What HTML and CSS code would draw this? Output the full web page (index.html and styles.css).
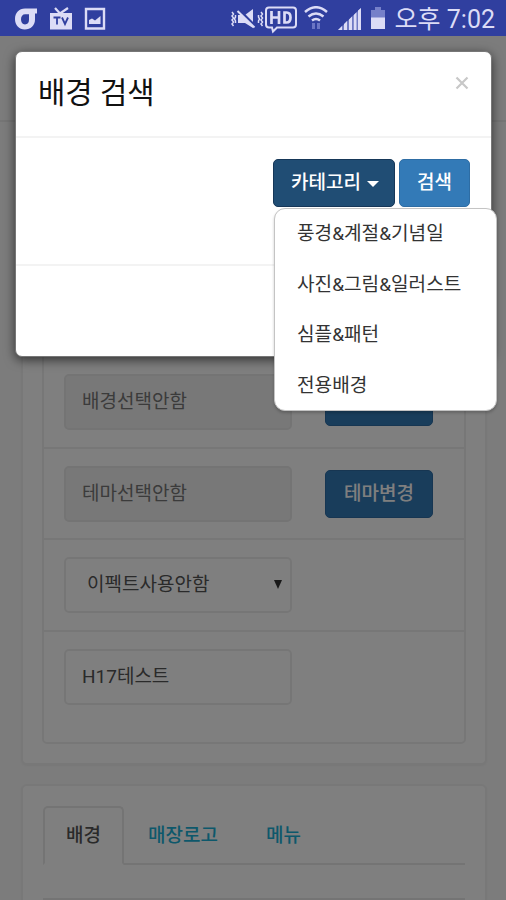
FILE: index.html
```html
<!DOCTYPE html>
<html lang="ko">
<head>
<meta charset="utf-8">
<title>배경 검색</title>
<link rel="stylesheet" href="styles.css">
</head>
<body>
<header class="status">
  <div class="status-left">
    <svg width="24" height="24" viewBox="0 0 24 24"><path d="M23 1.500H11C5 1.500 1 6 1 12s4 10.500 9.800 10.500S21 18.500 21 12.500V6.500h2z" fill="#dcdcf6"/><path d="M11.200 7.200H15v5.600c0 2.800-1.400 4.700-4 4.700s-4-2.100-4-5.200 1.600-5.100 4.200-5.100z" fill="#303f9f"/></svg>
    <svg width="24" height="24" viewBox="0 0 24 24"><path d="M6 1l5 5.500L19 1" fill="none" stroke="#dcdcf6" stroke-width="2.200"/><path d="M1 6h22v16.500H1z" fill="#dcdcf6"/><path d="M4.500 10.500h7M8 10.500v7M13 10.500l3 6.500 3-6.500" fill="none" stroke="#303f9f" stroke-width="1.800"/></svg>
    <svg width="22" height="24" viewBox="0 0 22 24"><path d="M2 2h18v19.500H2z" fill="none" stroke="#dcdcf6" stroke-width="2.400"/><path d="M5 17v-4l3-1.500 3 2L16.500 9v8z" fill="#dcdcf6"/></svg>
  </div>
  <div class="status-right">
    <svg class="mute" width="34" height="24" viewBox="0 0 34 24" fill="none" stroke="#dcdcf6" stroke-width="1.500"><path d="M2 4l1.500 2L2 8l1.500 2L2 12l1.500 2L2 16l1.500 2M5.500 7v2l-1 2 1 2v2M31 4l1.500 2L31 8l1.500 2-1.500 2 1.500 2-1.500 2 1.500 2M28.500 7v2l1 2-1 2v2"/><path d="M8 7h7l8-6v19l-8-5H8z" fill="#dcdcf6" stroke="none"/><path d="M9 2l17 17" stroke="#303f9f" stroke-width="3"/><path d="M7.500 3l17 16.500" stroke-width="2"/></svg>
    <svg class="hd" width="32" height="28" viewBox="0 0 32 28"><path d="M4 1.500h24q3 0 3 3v14q0 3-3 3H12l-4 4-1-4H4q-3 0-3-3v-14q0-3 3-3z" fill="none" stroke="#dcdcf6" stroke-width="2"/><path d="M6.500 5v13M6.500 11.500h7.500M14 5v13M19.500 6.500v10h2q4 0 4-5t-4-5z" fill="none" stroke="#dcdcf6" stroke-width="2.700"/></svg>
    <svg class="wifi" width="24" height="26" viewBox="0 0 24 26" fill="none" stroke="#dcdcf6" stroke-width="2.500"><path d="M1 6q11-9.500 22 0M4.500 10.500q7.500-6 15 0M8 14.500q4-3 8 0"/><path d="M9.500 17v6M14.500 17v6" stroke="#6b75c4" stroke-width="3"/></svg>
    <svg class="signal" width="24" height="24" viewBox="0 0 24 24"><path d="M0 23L23 1v22z" fill="#6f7ac4"/><path d="M0 23l4-4v4zM6 17l3-3v9H6zM11 12.500l3-3V23h-3zM15.800 8l2.700-2.700V23h-2.700zM20 3.500L23 1v22h-3z" fill="#dcdcf6"/></svg>
    <svg class="battery" width="16" height="24" viewBox="0 0 16 24"><path d="M5 0h6v3h4v8H1V3h4z" fill="#7680c9"/><path d="M1 10.500h14V22H1z" fill="#dcdcf6"/></svg>
    <span class="clock">오후 7:02</span>
  </div>
</header>
<div class="screen">
  <div class="page">
    <div class="navbar"></div>
    <section class="panel settings">
      <div class="list">
        <div class="row"></div>
        <div class="row"></div>
        <div class="row"><div class="field off">배경선택안함</div><div class="btn">배경변경</div></div>
        <div class="row"><div class="field off">테마선택안함</div><div class="btn">테마변경</div></div>
        <div class="row"><div class="field select"><span>이펙트사용안함</span><svg width="8" height="9" viewBox="0 0 8 9"><path d="M0 0h8L4 9z" fill="#333"/></svg></div></div>
        <div class="row"><div class="field">H17테스트</div></div>
      </div>
    </section>
    <section class="panel tabs-panel">
      <nav class="tabs"><span class="tab active">배경</span><span class="tab">매장로고</span><span class="tab">메뉴</span></nav>
      <div class="rule"></div>
    </section>
  </div>
  <div class="backdrop">
    <div class="modal">
      <div class="modal-head"><h1>배경 검색</h1><svg width="14" height="14" viewBox="0 0 14 14"><path d="M1.500 1.500l11 11M12.500 1.500l-11 11" stroke="#c8c8c8" stroke-width="2.200"/></svg></div>
      <div class="modal-body">
        <div class="dropdown">
          <div class="btn dark">카테고리<i class="caret"></i></div>
          <ul class="menu"><li>풍경&amp;계절&amp;기념일</li><li>사진&amp;그림&amp;일러스트</li><li>심플&amp;패턴</li><li>전용배경</li></ul>
        </div>
        <div class="btn search">검색</div>
      </div>
      <div class="modal-foot"></div>
    </div>
  </div>
</div>
</body>
</html>
```
FILE: styles.css
```css
* { box-sizing: border-box; }
body {
  margin: 0;
  height: 900px;
  overflow: hidden;
  display: flex;
  flex-direction: column;
  font: 19px/27px Roboto, "Noto Sans CJK KR", sans-serif;
  color: #555;
}
svg { display: block; flex: none; }
.status {
  height: 36px;
  flex: none;
  background: #303f9f;
  display: flex;
  justify-content: space-between;
  padding: 0 11px 0 14px;
}
.status-left { display: flex; gap: 11px; padding-top: 7px; }
.status-right { display: flex; align-items: flex-start; padding-top: 6px; }
.mute { margin-top: 2px; }
.hd { margin-left: 1px; }
.wifi { margin-left: 7px; }
.signal { margin: 1px 0 0 10px; }
.battery { margin: 1px 0 0 8px; }
.clock { margin-left: 9px; font-size: 25px; line-height: 28px; color: #dcdcf6; white-space: nowrap; }

.screen { position: relative; flex: 1; background: #f8f8f8; overflow: hidden; }
.page { padding: 0 19px 0 21px; }
.navbar { height: 86px; margin: 0 -19px 0 -21px; border-bottom: 2px solid #ebebeb; }
.panel { background: #fff; border: 2px solid #f0f0f0; border-radius: 6px; box-shadow: 0 1px 2px rgba(0, 0, 0, .04); }
.settings { height: 623px; margin-top: 20px; padding: 20px 19px; }
.list {
  height: 580px;
  display: flex;
  flex-direction: column;
  justify-content: flex-end;
  border: 2px solid #efefef;
  border-radius: 5px;
  padding-bottom: 21px;
}
.row { flex: none; height: 91.500px; display: flex; gap: 33px; align-items: flex-start; padding: 17px 20px 0; border-top: 2px solid #efefef; }
.field { width: 228px; height: 56px; border: 2px solid #ededed; border-radius: 5px; padding: 12px 16px; }
.off { background: #f1f1f1; border-color: #e8e8e8; color: #777; }
.select { display: flex; align-items: center; justify-content: space-between; padding: 0 8px 1px 21px; }
.btn {
  height: 48px;
  margin-top: 4px;
  padding: 9px 18px 0;
  border-radius: 5px;
  border: 1px solid #2e6da4;
  background: #337ab7;
  color: #fff;
  font-weight: 500;
  white-space: nowrap;
}
.tabs-panel { height: 180px; margin-top: 19px; padding: 20px 20px 0; }
.tabs { display: flex; height: 59px; border-bottom: 2px solid #e8e8e8; }
.tab { height: 59px; padding: 16px 24px 0; font-weight: 500; color: #1bb0d6; }
.tab.active { width: 81px; padding: 14px 21px 0; border: 2px solid #e8e8e8; border-bottom-color: #fff; border-radius: 5px 5px 0 0; color: #555; }
.rule { margin-top: 33px; border-top: 2px solid #e8e8e8; }

.backdrop { position: absolute; inset: 0; padding: 15px; background: rgba(0, 0, 0, .5); }
.modal { width: 477px; height: 306px; border: 1px solid #777; border-radius: 7px; background: #fff; box-shadow: 0 3px 11px rgba(0, 0, 0, .6); }
.modal-head { height: 86px; display: flex; justify-content: space-between; padding: 24px 22px 0 22px; border-bottom: 2px solid #f3f3f3; }
.modal-head h1 { margin: 0; font-size: 29.700px; line-height: 34px; font-weight: 400; color: #111; }
.modal-body { height: 128px; display: flex; justify-content: flex-end; gap: 4px; padding: 21px 21px 0; border-bottom: 2px solid #f3f3f3; }
.modal-body .btn { margin: 0; }
.modal-body .search { width: 71px; padding: 9px 17px 0; }
.dropdown { position: relative; }
.dark { width: 122px; display: flex; background: #204d74; border-color: #163758; }
.modal-body .dark { padding-left: 17px; }
.caret { margin: 12px 0 0 6px; height: 0; border: 6px solid transparent; border-top-color: #fff; border-bottom: 0; }
.menu {
  position: absolute;
  left: 1px;
  top: 49px;
  width: 223px;
  height: 203px;
  margin: 0;
  padding: 11px 22px;
  list-style: none;
  background: #fff;
  border: 1px solid #c4c4c4;
  border-radius: 11px;
  box-shadow: 0 2px 3px rgba(0, 0, 0, .2);
  color: #333;
  font-size: 19.100px;
}
.menu li { height: 50.500px; white-space: nowrap; }
```
